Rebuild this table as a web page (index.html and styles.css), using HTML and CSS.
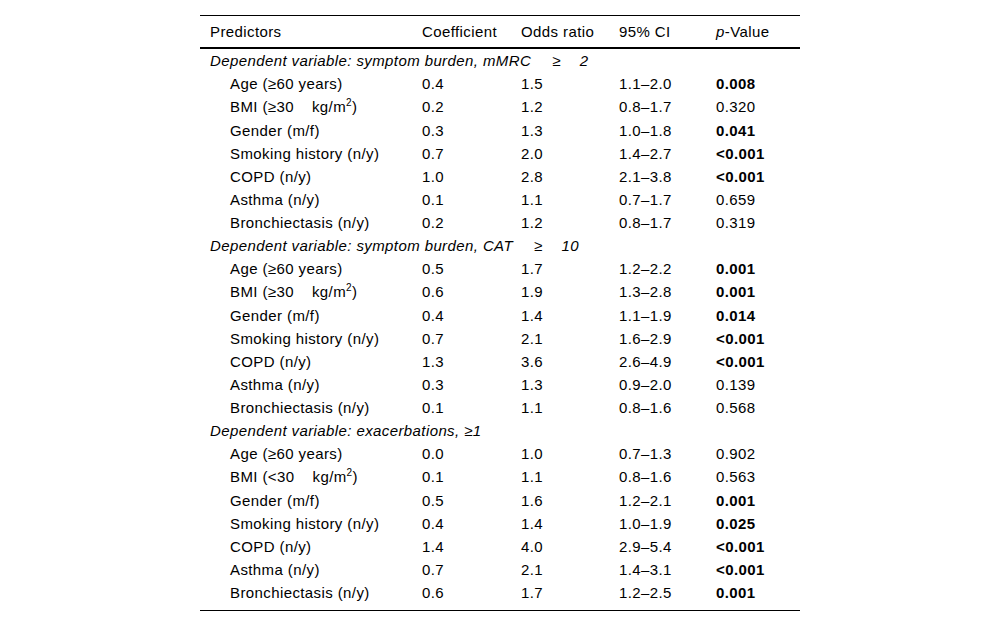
FILE: index.html
```html
<!DOCTYPE html>
<html lang="en">
<head>
<meta charset="utf-8">
<title>Predictors table</title>
<link rel="stylesheet" href="styles.css">
</head>
<body>
<div class="wrap">
<table class="results">
  <colgroup>
    <col class="c-pred">
    <col class="c-coef">
    <col class="c-odds">
    <col class="c-ci">
    <col class="c-p">
  </colgroup>
  <thead>
    <tr>
      <th>Predictors</th>
      <th>Coefficient</th>
      <th>Odds ratio</th>
      <th>95% CI</th>
      <th><i>p</i>-Value</th>
    </tr>
  </thead>
  <tbody>
    <tr class="group"><td colspan="5">Dependent variable: symptom burden, mMRC<span class="gap-a"></span>≥<span class="gap-b"></span>2</td></tr>
    <tr><td class="lbl">Age (≥60 years)</td><td>0.4</td><td>1.5</td><td>1.1–2.0</td><td><b>0.008</b></td></tr>
    <tr class="tall"><td class="lbl">BMI (≥30<span class="gap-c"></span>kg/m<sup>2</sup>)</td><td>0.2</td><td>1.2</td><td>0.8–1.7</td><td>0.320</td></tr>
    <tr><td class="lbl">Gender (m/f)</td><td>0.3</td><td>1.3</td><td>1.0–1.8</td><td><b>0.041</b></td></tr>
    <tr><td class="lbl">Smoking history (n/y)</td><td>0.7</td><td>2.0</td><td>1.4–2.7</td><td><b>&lt;0.001</b></td></tr>
    <tr><td class="lbl">COPD (n/y)</td><td>1.0</td><td>2.8</td><td>2.1–3.8</td><td><b>&lt;0.001</b></td></tr>
    <tr><td class="lbl">Asthma (n/y)</td><td>0.1</td><td>1.1</td><td>0.7–1.7</td><td>0.659</td></tr>
    <tr><td class="lbl">Bronchiectasis (n/y)</td><td>0.2</td><td>1.2</td><td>0.8–1.7</td><td>0.319</td></tr>

    <tr class="group"><td colspan="5">Dependent variable: symptom burden, CAT<span class="gap-a"></span>≥<span class="gap-b"></span>10</td></tr>
    <tr><td class="lbl">Age (≥60 years)</td><td>0.5</td><td>1.7</td><td>1.2–2.2</td><td><b>0.001</b></td></tr>
    <tr class="tall"><td class="lbl">BMI (≥30<span class="gap-c"></span>kg/m<sup>2</sup>)</td><td>0.6</td><td>1.9</td><td>1.3–2.8</td><td><b>0.001</b></td></tr>
    <tr><td class="lbl">Gender (m/f)</td><td>0.4</td><td>1.4</td><td>1.1–1.9</td><td><b>0.014</b></td></tr>
    <tr><td class="lbl">Smoking history (n/y)</td><td>0.7</td><td>2.1</td><td>1.6–2.9</td><td><b>&lt;0.001</b></td></tr>
    <tr><td class="lbl">COPD (n/y)</td><td>1.3</td><td>3.6</td><td>2.6–4.9</td><td><b>&lt;0.001</b></td></tr>
    <tr><td class="lbl">Asthma (n/y)</td><td>0.3</td><td>1.3</td><td>0.9–2.0</td><td>0.139</td></tr>
    <tr><td class="lbl">Bronchiectasis (n/y)</td><td>0.1</td><td>1.1</td><td>0.8–1.6</td><td>0.568</td></tr>

    <tr class="group"><td colspan="5">Dependent variable: exacerbations, ≥1</td></tr>
    <tr><td class="lbl">Age (≥60 years)</td><td>0.0</td><td>1.0</td><td>0.7–1.3</td><td>0.902</td></tr>
    <tr class="tall"><td class="lbl">BMI (&lt;30<span class="gap-c"></span>kg/m<sup>2</sup>)</td><td>0.1</td><td>1.1</td><td>0.8–1.6</td><td>0.563</td></tr>
    <tr><td class="lbl">Gender (m/f)</td><td>0.5</td><td>1.6</td><td>1.2–2.1</td><td><b>0.001</b></td></tr>
    <tr><td class="lbl">Smoking history (n/y)</td><td>0.4</td><td>1.4</td><td>1.0–1.9</td><td><b>0.025</b></td></tr>
    <tr><td class="lbl">COPD (n/y)</td><td>1.4</td><td>4.0</td><td>2.9–5.4</td><td><b>&lt;0.001</b></td></tr>
    <tr><td class="lbl">Asthma (n/y)</td><td>0.7</td><td>2.1</td><td>1.4–3.1</td><td><b>&lt;0.001</b></td></tr>
    <tr class="last"><td class="lbl">Bronchiectasis (n/y)</td><td>0.6</td><td>1.7</td><td>1.2–2.5</td><td><b>0.001</b></td></tr>
  </tbody>
</table>
</div>
</body>
</html>
```

FILE: styles.css
```css
html, body {
  margin: 0;
  padding: 0;
  background: #fff;
}

body {
  font-family: "Liberation Sans", Arial, Helvetica, sans-serif;
  font-size: 15px;
  letter-spacing: 0.4px;
  color: #000;
}

.wrap {
  padding-top: 15px;
  display: flex;
  justify-content: center;
}

.results {
  width: 600px;
  table-layout: fixed;
  border-collapse: separate;
  border-spacing: 0;
  border-top: 1px solid #000;
  border-bottom: 1px solid #000;
}

.c-pred { width: 212px; }
.c-coef { width: 99px; }
.c-odds { width: 98px; }
.c-ci { width: 97px; }
.c-p { width: 94px; }

.results th {
  font-weight: normal;
  text-align: left;
  line-height: 23px;
  padding: 4px 10px;
  border-bottom: 2px solid #000;
  white-space: nowrap;
}

.results td {
  line-height: 23px;
  height: 23px;
  padding: 0 10px;
  white-space: nowrap;
  vertical-align: top;
}

.results td.lbl {
  padding-left: 30px;
}

.results tr.group td {
  font-style: italic;
}

.results tr.tall td {
  height: 24px;
  line-height: 24px;
}

.results tr.last td {
  padding-bottom: 6px;
}

.results b {
  font-weight: bold;
}

.results sup {
  font-size: 10px;
  line-height: 0;
  vertical-align: 6px;
}

.gap-a {
  display: inline-block;
  width: 21px;
}

.gap-b {
  display: inline-block;
  width: 19px;
}

.gap-c {
  display: inline-block;
  width: 18px;
}
```
